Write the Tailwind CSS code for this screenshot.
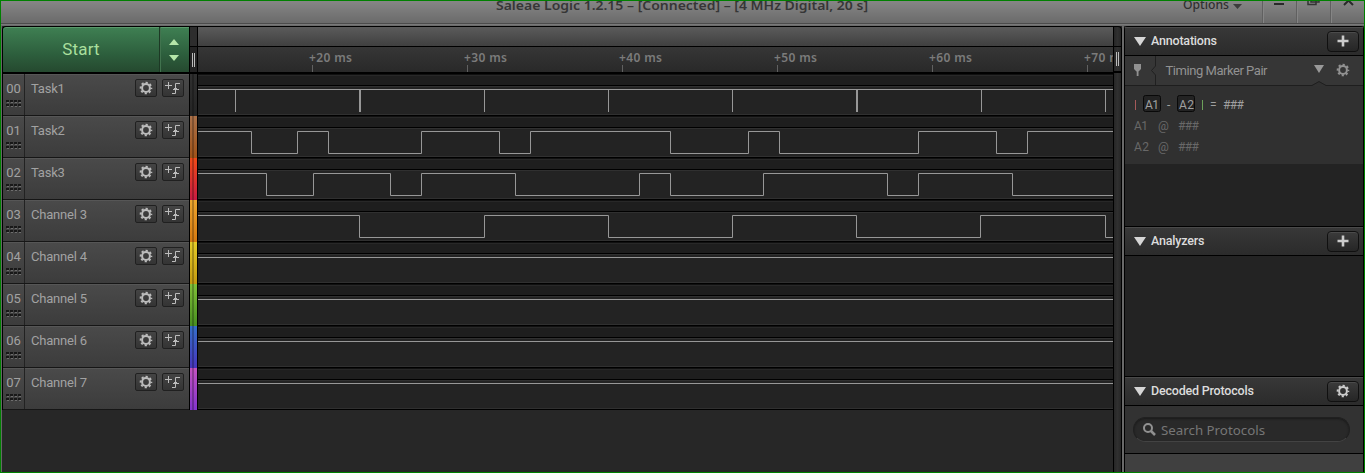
<!DOCTYPE html>
<html lang="en">
<head>
<meta charset="utf-8">
<title>Saleae Logic 1.2.15</title>
<script src="https://cdn.jsdelivr.net/npm/@tailwindcss/browser@4"></script>
</head>
<body class="h-[473px] w-[1365px] overflow-hidden bg-[#272727] font-['Roboto',sans-serif]">
<svg class="hidden">
  <symbol id="gear" viewBox="0 0 14 14">
    <g fill="none" stroke="currentColor">
      <circle cx="7" cy="7" r="3.9" stroke-width="2"/>
      <circle cx="7" cy="7" r="5.4" stroke-width="1.8" stroke-dasharray="2.2 2.041" stroke-dashoffset="1.1"/>
    </g>
  </symbol>
  <symbol id="trigger" viewBox="0 0 16 14">
    <path d="M0 4.500h7M3.500 1v7M7 12.500h3.500v-10H15M8 8.500h6M9 7.500h3" fill="none" stroke="currentColor"/>
  </symbol>
  <symbol id="grip" viewBox="0 0 16 8">
    <path d="M0 1h16M0 5h16" fill="none" stroke="#181818" stroke-width="2" stroke-dasharray="3 1"/>
    <path d="M1 2.500h15M1 6.500h15" fill="none" stroke="#6e6e6e" stroke-dasharray="2 2"/>
  </symbol>
</svg>
<div class="flex h-[473px] w-[1365px] flex-col overflow-hidden border border-[#008000]">
  <header class="flex h-[25px] shrink-0 border-b border-[#6b6b6b] bg-linear-to-b from-[#868686] to-[#686868] text-[#303030] shadow-[inset_0_-1px_0_#797979,inset_0_-2px_0_#4c4c4c]">
    <div class="w-[495px]"></div>
    <div class="w-[687px] whitespace-nowrap"><svg width="380" height="23" class="block"><text x="0" y="9" textLength="372" lengthAdjust="spacingAndGlyphs" font-family="Noto Sans" font-size="13" font-weight="600" fill="#363636">Saleae Logic 1.2.15 – [Connected] – [4 MHz Digital, 20 s]</text></svg></div>
    <svg width="181" height="23" class="block">
      <text x="0" y="8" textLength="46" lengthAdjust="spacingAndGlyphs" font-family="Noto Sans" font-size="13" font-weight="500" fill="#303030">Options</text>
      <path d="M50 3h9l-4.500 5z" fill="#3b3b3b"/>
      <path d="M79.500 0v22M113.500 0v22M147.500 0v22" stroke="#606060"/>
      <path d="M80.500 0v22M114.500 0v22M148.500 0v22" stroke="#858585"/>
      <path d="M91 3h10" stroke="#292929" stroke-width="2"/>
      <path d="M125 -1v4.500h8v-4.500M128 -2v3h8v-3" fill="none" stroke="#333" stroke-width="1.500"/>
      <path d="M161 4l4.500-4.500L170 4" fill="none" stroke="#292929" stroke-width="2"/>
    </svg>
  </header>
  <div class="flex min-h-0 flex-1">
    <div class="w-px bg-[#666]"></div>
    <!-- channels -->
    <div class="flex w-[187px] flex-col">
      <div class="flex h-12 shrink-0 rounded-tl border-y border-l border-b-2 border-black bg-linear-to-b from-[#3f8053] via-[#2d5f3d] via-60% to-[#25492f] text-[#a9df9d] shadow-[inset_0_1px_0_#5a996b]">
        <div class="flex w-[156px] items-center justify-center text-[17px] tracking-[.2px]">Start</div>
        <div class="w-px bg-[#1d3925]"></div>
        <div class="flex flex-1 flex-col items-center justify-center gap-2.5 border-l border-[#41734e]">
          <svg width="10" height="6" class="-ml-0.5"><path d="M0 6L5 0l5 6z" fill="#b5e6a9"/></svg>
          <svg width="10" height="6" class="-ml-0.5"><path d="M0 0l5 6 5-6z" fill="#b5e6a9"/></svg>
        </div>
      </div>
      <div id="channels" class="flex flex-col border-l border-black"></div>
    </div>
    <!-- colour strip -->
    <div class="flex w-[9px] flex-col">
      <div class="flex h-12 shrink-0 flex-col border-y border-b-2 border-black">
        <div class="h-[19px] border-x border-black bg-[#2d2d2d]"></div>
        <div class="flex flex-1 items-center justify-center gap-px border-x border-t border-black bg-[#232323]"><i class="h-3.5 w-px bg-[#bbb]"></i><i class="h-3.5 w-px bg-[#bbb]"></i></div>
      </div>
      <div id="strips" class="flex flex-col"></div>
    </div>
    <!-- waveforms -->
    <div class="flex w-[915px] flex-col">
      <div class="h-5 shrink-0 border-t border-black bg-linear-to-b from-[#5b5b5b] to-[#404040]"></div>
      <svg id="ruler" width="915" height="28" class="block shrink-0 border-t border-b-2 border-black bg-linear-to-b from-[#363636] to-[#292929]"></svg>
      <div id="waves" class="flex flex-col"></div>
    </div>
    <div class="flex w-[9px] flex-col rounded-tr border-x border-t border-black bg-linear-to-r from-[#262626] via-[#303030] to-[#262626]">
      <div class="h-[19px] shrink-0"></div>
      <div class="flex h-[27px] shrink-0 items-center justify-center gap-px border-t border-b-2 border-black"><i class="h-3.5 w-px bg-[#bbb]"></i><i class="h-3.5 w-px bg-[#bbb]"></i></div>
    </div>
    <div class="w-0.5 bg-[#696969]"></div>
    <!-- side panel -->
    <aside class="flex w-60 flex-col rounded-t border-x border-t border-black bg-[#232323]">
      <div class="flex h-[29px] shrink-0 items-center border-b border-black bg-linear-to-b from-[#383838] to-[#2b2b2b] pr-1 pl-[9px] text-[12.5px] font-medium tracking-[-.2px] text-[#dcdcdc] shadow-[inset_0_1px_0_#4a4a4a]">
        <svg width="12" height="9"><path d="M0 0h12L6 9z" fill="#d6d6d6"/></svg><span class="ml-[5px] flex-1 pt-px">Annotations</span>
        <button class="flex h-[21px] w-8 items-center justify-center rounded border border-[#101010] bg-linear-to-b from-[#3b3b3b] to-[#262626] shadow-[inset_0_1px_0_#4b4b4b]"><svg width="12" height="12"><path d="M.5 6h11M6 .5v11" stroke="#ccc" stroke-width="2.600"/></svg></button>
      </div>
      <svg width="238" height="30" class="block shrink-0 bg-[#323232]">
        <rect width="238" height="29" fill="#363636"/>
        <path d="M0 29.500h187l7-4 7 4h37" fill="#303030" stroke="#1e1e1e"/>
        <path d="M30.500 0v10l-4 4.500 4 4.500v10" fill="none" stroke="#202020"/>
        <path d="M9 8h7v5l-2.500 2.500h-2l-2.500-2.500zM11.700 15h1.800v5h-1.800z" fill="#919191"/>
        <text x="40.500" y="19" textLength="102" font-family="Roboto" font-size="13" fill="#929292">Timing Marker Pair</text>
        <path d="M189 9h10l-5 8z" fill="#999"/>
        <use href="#gear" x="211" y="7" width="14" height="14" color="#929292"/>
      </svg>
      <svg width="238" height="78" class="block shrink-0 bg-[#303030]" font-family="Roboto" font-size="12">
        <path d="M10.500 14v10" stroke="#a55a5a"/><path d="M77.500 14v10" stroke="#6ca05a"/>
        <rect x="18.500" y="9.500" width="17" height="16" rx="2" fill="#232323" stroke="#090909"/>
        <rect x="52.500" y="9.500" width="17" height="16" rx="2" fill="#232323" stroke="#090909"/>
        <g fill="#a0a0a0"><text x="20" y="23" textLength="14">A1</text><text x="42" y="23">-</text><text x="54" y="23" textLength="15">A2</text><text x="85" y="23">=</text><text x="98" y="23" textLength="21">###</text></g>
        <g fill="#686868"><text x="9" y="44" textLength="14">A1</text><text x="33" y="44">@</text><text x="53" y="44" textLength="21">###</text><text x="9" y="65" textLength="15">A2</text><text x="33" y="65">@</text><text x="53" y="65" textLength="21">###</text></g>
      </svg>
      <div class="h-[62px] shrink-0"></div>
      <div class="flex h-[30px] shrink-0 items-center border-y border-black bg-linear-to-b from-[#383838] to-[#2b2b2b] pr-1 pl-[9px] text-[12.5px] font-medium tracking-[-.2px] text-[#dcdcdc] shadow-[inset_0_1px_0_#4a4a4a]">
        <svg width="12" height="9"><path d="M0 0h12L6 9z" fill="#d6d6d6"/></svg><span class="ml-[5px] flex-1 pt-px">Analyzers</span>
        <button class="flex h-[21px] w-8 items-center justify-center rounded border border-[#101010] bg-linear-to-b from-[#3b3b3b] to-[#262626] shadow-[inset_0_1px_0_#4b4b4b]"><svg width="12" height="12"><path d="M.5 6h11M6 .5v11" stroke="#ccc" stroke-width="2.600"/></svg></button>
      </div>
      <div class="h-[120px] shrink-0"></div>
      <div class="flex h-[30px] shrink-0 items-center border-y border-black bg-linear-to-b from-[#383838] to-[#2b2b2b] pr-1 pl-[9px] text-[12.5px] font-medium tracking-[-.2px] text-[#dcdcdc] shadow-[inset_0_1px_0_#4a4a4a]">
        <svg width="12" height="9"><path d="M0 0h12L6 9z" fill="#d6d6d6"/></svg><span class="ml-[5px] flex-1 pt-px">Decoded Protocols</span>
        <button class="flex h-[21px] w-8 items-center justify-center rounded border border-[#101010] bg-linear-to-b from-[#3b3b3b] to-[#262626] shadow-[inset_0_1px_0_#4b4b4b]"><svg width="14" height="14" class="text-[#ccc]"><use href="#gear"/></svg></button>
      </div>
      <div class="h-12 shrink-0 border-b border-black bg-[#323232] px-2 pt-[11px]">
        <div class="flex h-[25px] w-[217px] items-center rounded-full border border-[#202020] border-b-[#434343] bg-[#292929] pl-[9px] shadow-[inset_0_1px_2px_#1a1a1a]">
          <svg width="13" height="13" fill="none" stroke="#919191"><circle cx="5" cy="5" r="4" stroke-width="2"/><path d="M8 8l4 4" stroke-width="2.500"/></svg>
          <svg width="120" height="20" class="ml-[5px]"><text x="0" y="14.500" textLength="104" lengthAdjust="spacingAndGlyphs" font-family="Noto Sans" font-size="13" fill="#767676">Search Protocols</text></svg>
        </div>
      </div>
      <div class="flex-1 bg-[#404040]"></div>
    </aside>
  </div>
</div>
<script>
const names = ['Task1', 'Task2', 'Task3', 'Channel 3', 'Channel 4', 'Channel 5', 'Channel 6', 'Channel 7'];
const colors = [['#303030', '#242424'], ['#aa7048', '#a05318'], ['#f04a18', '#c81b42'], ['#eba52e', '#d67910'], ['#e5cb27', '#c49a10'], ['#80bf38', '#488f20'], ['#356fc8', '#4736bd'], ['#c452c0', '#8334cc']];
const edges = {
  1: [251, 297, 328, 421, 499, 530, 670, 748, 779, 918, 996, 1027],
  2: [266, 313, 390, 421, 515, 639, 670, 763, 887, 918, 1012],
  3: [359, 484, 608, 732, 856, 980, 1105]
};
const pulses = [[235, 1], [359, 2], [484, 1], [608, 1], [732, 1], [856, 2], [981, 1], [1105, 1]];
const button = (icon, w) => `<button class="flex h-[18px] w-[22px] items-center justify-center rounded-[2px] border border-[#202020] bg-linear-to-b from-[#444] to-[#343434] text-[#bcbcbc]"><svg width="${w}" height="14"><use href="#${icon}"/></svg></button>`;
let rows = '', strips = '', waves = '';
names.forEach((name, i) => {
  rows += `<div class="flex h-[42px] border-b border-[#161616] bg-linear-to-b from-[#4a4a4a] to-[#3c3c3c] text-[#a2a2a2] shadow-[inset_0_1px_0_#565656]">
    <div class="flex w-[22px] flex-col items-center border-r border-[#222] pt-[6px] text-[13px] leading-[18px]"><span>0${i}</span><svg width="16" height="8" class="mt-0.5"><use href="#grip" width="16" height="8"/></svg></div>
    <div class="flex flex-1 items-start gap-[5px] pt-[5px] pr-[5px] pl-1.5"><span class="flex-1 pt-px text-[13px] leading-[18px] tracking-[-.2px]">${name}</span>${button('gear', 14)}${button('trigger', 16)}</div></div>`;
  strips += `<div class="flex h-[42px] border-x border-black"><i class="h-full w-0.5" style="background:linear-gradient(${colors[i]})"></i><i class="h-full w-0.5 brightness-75" style="background:linear-gradient(${colors[i]})"></i><i class="h-full flex-1" style="background:linear-gradient(${colors[i]})"></i></div>`;
  let d = 'M0 15.5', high = true;
  (edges[i] || []).forEach(x => { high = !high; d += `H${x - 197.5}V${high ? 15.5 : 37.5}`; });
  d += 'H915';
  const bars = i ? '' : pulses.map(([x, w]) => `<rect x="${x - 198}" y="16" width="${w}" height="22" fill="#979797"/>`).join('');
  waves += `<svg width="915" height="42" class="block"><rect width="915" height="42" fill="#232323"/><rect width="915" height="11" fill="#1e1e1e"/><path d="M0 .5h915" stroke="#101010"/><path d="M0 1.500h915" stroke="#282828"/><path d="M0 12.500h915M0 40.500h915" stroke="#303030"/><path d="M0 11.500h915M0 41.500h915" stroke="#000"/><path d="${d}" fill="none" stroke="#979797"/>${bars}</svg>`;
});
document.getElementById('channels').innerHTML = rows;
document.getElementById('strips').innerHTML = strips;
document.getElementById('waves').innerHTML = waves;
let marks = '';
[312, 467, 622, 777, 932, 1087].forEach((x, i) => {
  marks += `<text x="${x - 201}" y="15" textLength="43" lengthAdjust="spacing" font-family="Noto Sans" font-size="12" font-weight="600" fill="#7b7b7b">+${20 + i * 10} ms</text><path d="M${x - 197.5} 18v7" stroke="#606060"/>`;
});
document.getElementById('ruler').innerHTML = marks;
</script>
</body>
</html>
